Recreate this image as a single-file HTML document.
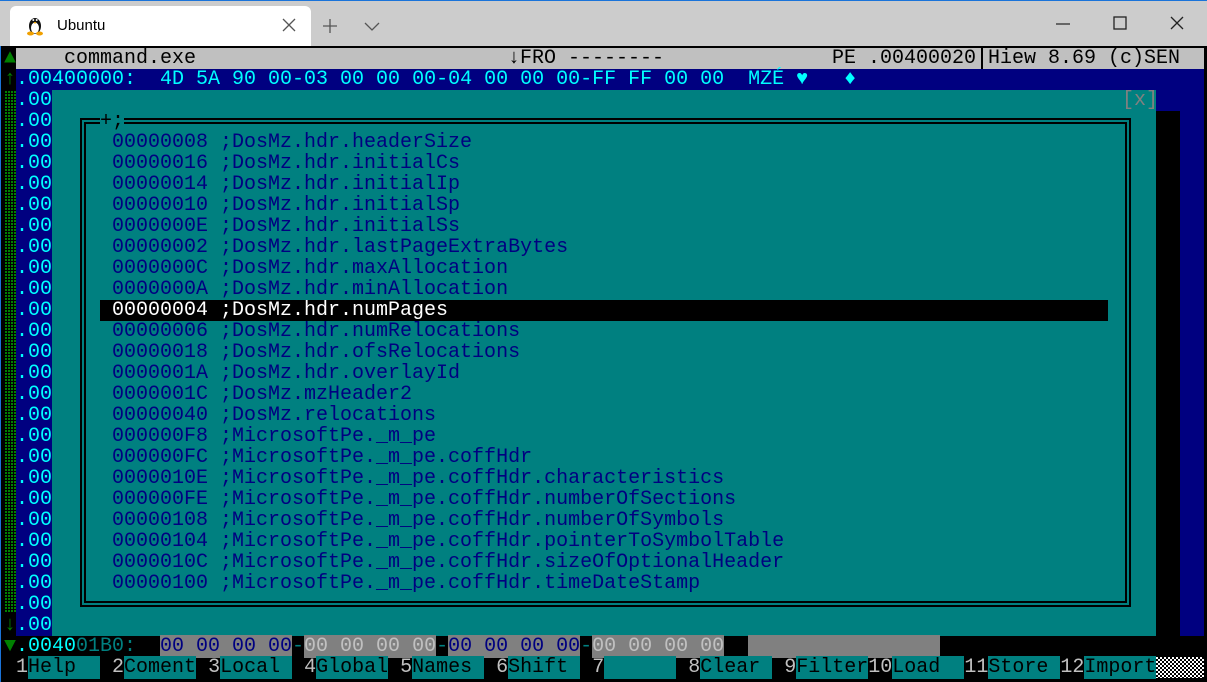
<!DOCTYPE html>
<html><head><meta charset="utf-8"><style>
*{margin:0;padding:0;box-sizing:border-box}
body{width:1207px;height:682px;overflow:hidden;background:#000;position:relative;font-family:"Liberation Mono",monospace}
.a{position:absolute}
.t{position:absolute;white-space:pre;font:20px/21px "Liberation Mono",monospace;height:21px}
</style></head><body>
<!-- title bar -->
<div class="a" style="left:0;top:0;width:1207px;height:46px;background:#cccccc;border-top:1px solid #1a73d9"></div>
<div class="a" style="left:10px;top:6px;width:301px;height:40px;background:#fff;border-radius:6px 6px 0 0"></div>
<svg class="a" style="left:24px;top:14px" width="22" height="22" viewBox="0 0 22 22">
<ellipse cx="11" cy="12" rx="6" ry="8" fill="#111"/><ellipse cx="11" cy="14" rx="4" ry="5.5" fill="#fff"/>
<circle cx="9.3" cy="6" r="1" fill="#fff"/><circle cx="12.7" cy="6" r="1" fill="#fff"/>
<path d="M9.5 8 L12.5 8 L11 10 Z" fill="#f0a000"/>
<ellipse cx="6.5" cy="19.5" rx="3.5" ry="2" fill="#f0a000"/><ellipse cx="15.5" cy="19.5" rx="3.5" ry="2" fill="#f0a000"/>
</svg>
<div class="a" style="left:57px;top:17px;font:15px 'Liberation Sans',sans-serif;color:#000">Ubuntu</div>
<svg class="a" style="left:282px;top:18px" width="14" height="14"><path d="M1 1L13 13M13 1L1 13" stroke="#555" stroke-width="1.3"/></svg>
<svg class="a" style="left:322px;top:18px" width="16" height="16"><path d="M8 1V15M1 8H15" stroke="#555" stroke-width="1.3"/></svg>
<svg class="a" style="left:364px;top:22px" width="16" height="10"><path d="M1 1L8 8L15 1" stroke="#555" stroke-width="1.3" fill="none"/></svg>
<svg class="a" style="left:1055px;top:22px" width="16" height="4"><path d="M1 2H15" stroke="#222" stroke-width="1.2"/></svg>
<svg class="a" style="left:1113px;top:16px" width="14" height="14"><rect x="1" y="1" width="12" height="12" stroke="#222" stroke-width="1.3" fill="none"/></svg>
<svg class="a" style="left:1170px;top:16px" width="14" height="14"><path d="M1 1L13 13M13 1L1 13" stroke="#222" stroke-width="1.3"/></svg>
<div class="a" style="left:0;top:46px;width:1px;height:636px;background:#1a73d9"></div>

<!-- terminal backgrounds -->
<div class="a" style="left:16px;top:48px;width:1188px;height:21px;background:#c0c0c0"></div>
<div class="a" style="left:16px;top:69px;width:1188px;height:567px;background:#000080"></div>
<div class="a" style="left:1156px;top:111px;width:24px;height:525px;background:#000"></div>
<div class="a" style="left:52px;top:90px;width:1104px;height:546px;background:#008080"></div>
<div class="a" style="left:80px;top:118px;width:1051px;height:489px;border:2px solid #000"></div>
<div class="a" style="left:84px;top:122px;width:1043px;height:481px;border:2px solid #000"></div>
<div class="a" style="left:100px;top:300px;width:1008px;height:21px;background:#000"></div>

<!-- scrollbar -->
<div class="t" style="left:4px;top:48px;color:#008000">▲</div>
<div class="t" style="left:4px;top:69px;color:#008000">↑</div>
<div class="a" style="left:5px;top:91px;width:11px;height:522px;background-color:#000;background-image:linear-gradient(0deg,#000 1px,transparent 1px),linear-gradient(90deg,#008000 2px,transparent 2px);background-size:3px 3px,3px 3px"></div>
<div class="t" style="left:4px;top:615px;color:#008000">↓</div>
<div class="t" style="left:4px;top:636px;color:#008000">▼</div>

<!-- row 0 -->
<div class="t" style="left:64px;top:48px;color:#000">command.exe</div>
<div class="t" style="left:508px;top:48px;color:#000">↓FRO --------</div>
<div class="t" style="left:832px;top:48px;color:#000">PE .00400020</div>
<div class="a" style="left:981px;top:48px;width:2px;height:21px;background:#000"></div>
<div class="t" style="left:988px;top:48px;color:#000">Hiew 8.69 (c)SEN</div>
<!-- row 1 -->
<div class="t" style="left:16px;top:69px;color:#00ffff">.00400000:  4D 5A 90 00-03 00 00 00-04 00 00 00-FF FF 00 00  MZÉ ♥   ♦</div>
<!-- left .00 -->
<div class="t" style="left:16px;top:90px;color:#00ffff;height:546px">.00
.00
.00
.00
.00
.00
.00
.00
.00
.00
.00
.00
.00
.00
.00
.00
.00
.00
.00
.00
.00
.00
.00
.00
.00
.00</div>
<div class="t" style="left:1122px;top:90px;color:#808080">[x]</div>
<div class="t" style="left:100px;top:111px;color:#000;background:#008080">+;</div>
<div class="t" style="left:112px;top:132px;color:#000080;height:462px">00000008 ;DosMz.hdr.headerSize
00000016 ;DosMz.hdr.initialCs
00000014 ;DosMz.hdr.initialIp
00000010 ;DosMz.hdr.initialSp
0000000E ;DosMz.hdr.initialSs
00000002 ;DosMz.hdr.lastPageExtraBytes
0000000C ;DosMz.hdr.maxAllocation
0000000A ;DosMz.hdr.minAllocation
<span style="color:#fff">00000004 ;DosMz.hdr.numPages</span>
00000006 ;DosMz.hdr.numRelocations
00000018 ;DosMz.hdr.ofsRelocations
0000001A ;DosMz.hdr.overlayId
0000001C ;DosMz.mzHeader2
00000040 ;DosMz.relocations
000000F8 ;MicrosoftPe._m_pe
000000FC ;MicrosoftPe._m_pe.coffHdr
0000010E ;MicrosoftPe._m_pe.coffHdr.characteristics
000000FE ;MicrosoftPe._m_pe.coffHdr.numberOfSections
00000108 ;MicrosoftPe._m_pe.coffHdr.numberOfSymbols
00000104 ;MicrosoftPe._m_pe.coffHdr.pointerToSymbolTable
0000010C ;MicrosoftPe._m_pe.coffHdr.sizeOfOptionalHeader
00000100 ;MicrosoftPe._m_pe.coffHdr.timeDateStamp</div>

<!-- row 28 hex -->
<div class="a" style="left:64px;top:636px;width:1116px;height:21px;background:#000"></div>
<div class="t" style="left:16px;top:636px;color:#00ffff">.0040</div>
<div class="t" style="left:76px;top:636px;color:#008080">01B0:</div>
<div class="t" style="left:160px;top:636px"><span style="background:#808080;color:#000080">00 00 00 00</span><span style="color:#008080">-</span><span style="background:#808080;color:#c0c0c0">00 00 00 00</span><span style="color:#008080">-</span><span style="background:#808080;color:#000080">00 00 00 00</span><span style="color:#008080">-</span><span style="background:#808080;color:#c0c0c0">00 00 00 00</span>  <span style="background:#808080">                </span></div>

<!-- row 29 fn keys -->
<div class="t" style="left:16px;top:657px;color:#c0c0c0">1<span style="background:#008080;color:#000">Help  </span> 2<span style="background:#008080;color:#000">Coment</span> 3<span style="background:#008080;color:#000">Local </span> 4<span style="background:#008080;color:#000">Global</span> 5<span style="background:#008080;color:#000">Names </span> 6<span style="background:#008080;color:#000">Shift </span> 7<span style="background:#008080;color:#000">      </span> 8<span style="background:#008080;color:#000">Clear </span> 9<span style="background:#008080;color:#000">Filter</span>10<span style="background:#008080;color:#000">Load  </span>11<span style="background:#008080;color:#000">Store </span>12<span style="background:#008080;color:#000">Import</span></div>
<div class="a" style="left:1156px;top:657px;width:48px;height:21px;background-color:#fff;background-image:linear-gradient(45deg,#000 25%,transparent 25%,transparent 75%,#000 75%),linear-gradient(45deg,#000 25%,transparent 25%,transparent 75%,#000 75%);background-size:4px 4px;background-position:0 0,2px 2px"></div>
</body></html>
